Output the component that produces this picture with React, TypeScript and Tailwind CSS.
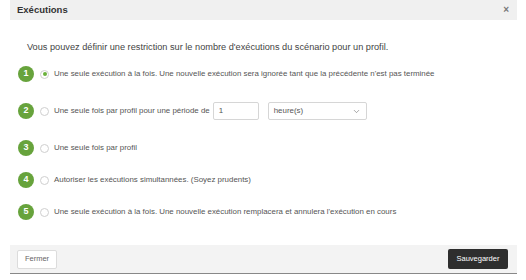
import { ChevronDown } from "lucide-react";

const options = [
  {
    n: "1",
    label:
      "Une seule exécution à la fois. Une nouvelle exécution sera ignorée tant que la précédente n'est pas terminée",
    checked: true,
    mt: "mt-[12px]",
  },
  { n: "2", label: "Une seule fois par profil pour une période de", period: true, mt: "mt-[19px]" },
  { n: "3", label: "Une seule fois par profil", mt: "mt-[19px]" },
  { n: "4", label: "Autoriser les exécutions simultannées. (Soyez prudents)", mt: "mt-[14px]" },
  {
    n: "5",
    label:
      "Une seule exécution à la fois. Une nouvelle exécution remplacera et annulera l'exécution en cours",
    mt: "mt-[14px]",
  },
];

export default function App() {
  return (
    <div className="w-[526px] h-[280px] bg-white font-['Liberation_Sans',Arial,sans-serif] overflow-hidden">
      <div className="ml-[10px] w-[507px] flex flex-col">
        {/* Header */}
        <div className="h-[20px] bg-[#f0f0f0] flex items-center justify-between pl-[7px] pr-[8px]">
          <span className="text-[9.5px] font-bold text-[#333]">Exécutions</span>
          <span className="text-[10px] font-bold text-[#777] leading-none">×</span>
        </div>

        {/* Body */}
        <div className="pl-[8px] pt-[21px]">
          <p className="pl-[9px] h-[12px] leading-[12px] text-[9.2px] text-[#444]">
            Vous pouvez définir une restriction sur le nombre d'exécutions du scénario pour un profil.
          </p>

          {options.map((o) => (
            <div key={o.n} className={`${o.mt} h-[18px] flex items-center`}>
              <span className="w-[16px] h-[16px] rounded-full bg-[#67a33c] text-white text-[9px] font-bold flex items-center justify-center">
                {o.n}
              </span>
              <span className="ml-[6px] w-[9px] h-[9px] rounded-full border border-[#cfcfcf] bg-white flex items-center justify-center">
                {o.checked && <span className="w-[4px] h-[4px] rounded-full bg-[#6bb13c]" />}
              </span>
              <span className="ml-[5px] text-[7.9px] text-[#555]">{o.label}</span>
              {o.period && (
                <>
                  <div className="ml-[3px] w-[46px] h-[18px] border border-[#d6d6d6] rounded-[2px] flex items-center pl-[5px] text-[7.9px] text-[#555]">
                    1
                  </div>
                  <div className="ml-[9px] w-[99px] h-[18px] border border-[#d6d6d6] rounded-[2px] flex items-center justify-between pl-[5px] pr-[5px] text-[7.9px] text-[#555]">
                    <span>heure(s)</span>
                    <ChevronDown size={9} strokeWidth={1.5} className="text-[#666]" />
                  </div>
                </>
              )}
            </div>
          ))}
        </div>

        {/* Footer */}
        <div className="mt-[24px] h-[29px] bg-[#f3f3f3] border-b border-[#888] flex items-center justify-between pl-[7px] pr-[9px]">
          <button className="h-[19px] w-[40px] bg-white border border-[#dcdcdc] rounded-[2px] text-[7.5px] text-[#666]">
            Fermer
          </button>
          <button className="h-[20px] w-[60px] bg-[#2e2e2e] rounded-[2px] text-[7.5px] text-white">
            Sauvegarder
          </button>
        </div>
      </div>
    </div>
  );
}
